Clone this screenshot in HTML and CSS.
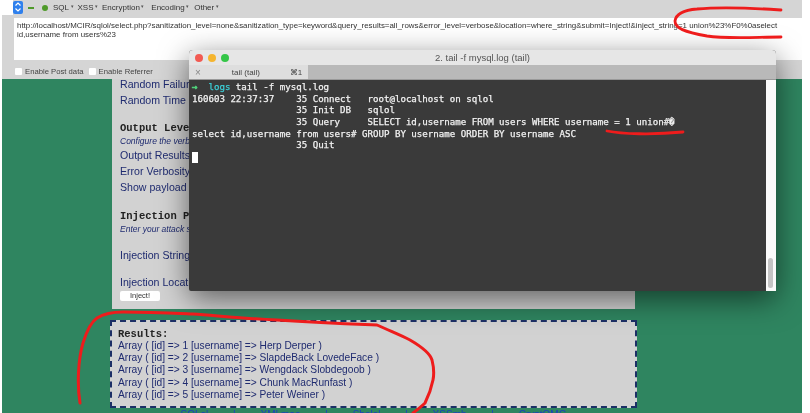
FILE: index.html
```html
<!DOCTYPE html>
<html lang="en">
<head>
<meta charset="utf-8">
<title>SQLol injection</title>
<link rel="stylesheet" href="styles.css">
</head>
<body>
<div class="shot">
  <header class="toolbar">
    <nav class="menu">
      <span class="stepper"><svg width="10" height="12" viewBox="0 0 10 12"><path d="M2.500 4.500 5 2l2.500 2.500M2.500 7.500 5 10l2.500-2.500" fill="none" stroke="#fff" stroke-width="1.200"/></svg></span>
      <span class="dash"></span>
      <span class="plus"></span>
      <span class="item">SQL</span><span class="item">XSS</span><span class="item wide">Encryption</span><span class="item mid">Encoding</span><span class="item">Other</span>
    </nav>
    <div class="url">http://localhost/MCIR/sqlol/select.php?sanitization_level=none&amp;sanitization_type=keyword&amp;query_results=all_rows&amp;error_level=verbose&amp;location=where_string&amp;submit=Inject!&amp;inject_string=1 union%23%F0%0aselect id,username from users%23</div>
    <div class="options">
      <span class="check"></span><span class="opt">Enable Post data</span>
      <span class="check"></span><span class="opt">Enable Referrer</span>
    </div>
  </header>
  <main class="page">
    <section class="panel">
      <p class="row first">Random Failure</p>
      <p class="row">Random Time Delay</p>
      <h3 class="head h-output">Output Level</h3>
      <p class="hint">Configure the verbosity</p>
      <p class="row tight">Output Results:</p>
      <p class="row tight">Error Verbosity:</p>
      <p class="row tight">Show payload in</p>
      <h3 class="head h-inject">Injection Parameters</h3>
      <p class="hint">Enter your attack string</p>
      <p class="row gap-a">Injection String:</p>
      <p class="row gap-b">Injection Location</p>
      <button class="inject" type="button">Inject!</button>
    </section>
    <section class="results">
      <h3 class="head">Results:</h3>
      <p>Array ( [id] =&gt; 1 [username] =&gt; Herp Derper )</p>
      <p>Array ( [id] =&gt; 2 [username] =&gt; SlapdeBack LovedeFace )</p>
      <p>Array ( [id] =&gt; 3 [username] =&gt; Wengdack Slobdegoob )</p>
      <p>Array ( [id] =&gt; 4 [username] =&gt; Chunk MacRunfast )</p>
      <p>Array ( [id] =&gt; 5 [username] =&gt; Peter Weiner )</p>
    </section>
    <footer class="foot">SQLol | XMLmao | Shelol | XSSmh | CryptOMG</footer>
  </main>

  <div class="terminal">
    <div class="titlebar">
      <span class="light red"></span><span class="light yellow"></span><span class="light green"></span>
      <span class="title">2. tail -f mysql.log (tail)</span>
    </div>
    <div class="tabs">
      <div class="tab"><span class="tab-x">×</span><span class="tab-name">tail (tail)</span><span class="tab-key">⌘1</span></div>
    </div>
    <div class="term-body">
      <div class="log">
        <div class="line"><span class="arrow">→</span>  <span class="cwd">logs</span> tail -f mysql.log</div>
        <div class="line">160603 22:37:37    35 Connect   root@localhost on sqlol</div>
        <div class="line">                   35 Init DB   sqlol</div>
        <div class="line">                   35 Query     SELECT id,username FROM users WHERE username = 1 union#�</div>
        <div class="line">select id,username from users# GROUP BY username ORDER BY username ASC</div>
        <div class="line">                   35 Quit</div>
        <div class="line"><span class="cursor"></span></div>
      </div>
      <div class="scroll"><span class="thumb"></span></div>
    </div>
  </div>

  <svg class="ink" width="800" height="413" viewBox="0 0 800 413">
    <path d="M779 10C750 8 715 7 695 9 682 10 674 14 673 21 673 28 682 32 705 36 725 39 755 37 779 37"/>
    <path d="M605 131C620 134 650 135 681 132"/>
    <path class="fat" d="M78 403C75 385 76 360 81 343 85 330 89 322 95 318 103 313 113 312 121 312 148 312 168 313 191 314 218 316 248 319 275 320 318 323 348 324 375 325 388 331 398 335 408 340 420 347 428 353 430 360 432 368 432 375 431 380 429 390 426 397 423 403 419 407 415 410 411 413"/>
  </svg>
</div>
</body>
</html>
```

FILE: styles.css
```css
* { box-sizing: border-box; }
html, body { margin: 0; padding: 0; background: #fff; overflow: hidden; }
p, h3 { margin: 0; }
.shot {
  position: relative;
  width: 800px;
  height: 413px;
  margin-left: 2px;
  display: flex;
  flex-direction: column;
  overflow: hidden;
  font-family: "Liberation Sans", Arial, sans-serif;
  filter: blur(.4px);
}
.toolbar { height: 79px; background: #d5d5d5; flex: none; display: flex; flex-direction: column; }
.menu { height: 15px; display: flex; align-items: center; font-size: 8px; color: #333; background: linear-gradient(to right, #fff 11px, transparent 11px); }
.stepper { width: 10px; height: 13px; background: #2f80ed; border-radius: 2px; display: flex; margin-left: 11px; }
.dash { width: 6px; height: 2px; background: #4f9a2a; margin-left: 5px; }
.plus { width: 6px; height: 6px; border-radius: 50%; background: #4f9a2a; margin-left: 8px; }
.item { margin-left: 4px; }
.item::after { content: "▾"; font-size: 5px; margin-left: 1.500px; vertical-align: 2px; color: #555; }
.plus + .item { margin-left: 5px; }
.wide { margin-right: 3px; }
.mid { margin-right: 1px; }
.url {
  margin: 3px 0 0 12px;
  height: 42px;
  width: 788px;
  background: #fff;
  font-size: 7.920px;
  line-height: 9px;
  color: #333;
  padding: 3px 3px;
}
.options { display: flex; align-items: center; height: 16px; margin-top: 3px; padding-left: 13px; font-size: 7.700px; color: #444; }
.check { width: 7px; height: 7px; background: #fff; border-radius: 1px; margin-right: 3px; }
.opt { margin-right: 5px; }
.page { flex: 1; min-height: 0; background: #2f8560; position: relative; padding-left: 110px; display: flex; flex-direction: column; align-items: flex-start; }
.panel { flex: none; width: 523px; height: 230px; background: #d2d2d2; padding: 0 0 0 8px; color: #1f2b70; }
.row { font-size: 10.600px; line-height: 14px; }
.first { margin-top: -2px; }
.row + .row { margin-top: 2px; }
.head { font: bold 10.500px/12px "Liberation Mono", monospace; color: #222; }
.h-output { margin-top: 15px; }
.h-inject { margin-top: 16px; }
.hint { font-size: 8.500px; font-style: italic; line-height: 11px; margin-top: 2px; }
.hint + .tight { margin-top: 1px; }
.row.gap-a { margin-top: 13px; }
.row.gap-b { margin-top: 13px; }
.inject { display: block; width: 40px; height: 10px; margin-top: 2px; padding: 0; border: 0; background: #fff; border-radius: 2px; font: 7.500px/10px "Liberation Sans", sans-serif; color: #333; }
.results {
  flex: none;
  width: 527px;
  height: 88px;
  margin: 11px 0 0 -2px;
  background: #d2d2d2;
  border: 2px dashed #1c2f66;
  padding: 6px 6px 0;
  color: #1f2b70;
  font-size: 10.200px;
  line-height: 12.200px;
}
.foot { flex: none; width: 527px; margin: 1px 0 0 -2px; text-align: center; font-size: 10px; line-height: 12px; color: #1b3fbf; word-spacing: 22px; }
.terminal {
  position: absolute;
  left: 187px;
  top: 50px;
  width: 587px;
  height: 241px;
  border-radius: 4px 4px 2px 2px;
  display: flex;
  flex-direction: column;
  box-shadow: 0 8px 30px rgba(0, 0, 0, .55);
  background: #3a3a3a;
}
.titlebar { height: 15px; background: #e6e6e6; border-radius: 4px 4px 0 0; display: flex; align-items: center; padding-left: 6px; position: relative; flex: none; }
.light { width: 8px; height: 8px; border-radius: 50%; margin-right: 5px; }
.red { background: #f25a52; }
.yellow { background: #f5b52f; }
.green { background: #35c648; }
.title { position: absolute; left: 0; right: 0; text-align: center; font-size: 9.500px; color: #555; }
.tabs { height: 15px; background: #b9b9b9; flex: none; border-bottom: 1px solid #999; }
.tab { width: 119px; height: 14px; background: #dedede; font-size: 8px; color: #444; display: flex; align-items: center; }
.tab-x { margin-left: 6px; color: #888; font-size: 10px; }
.tab-name { margin-left: 31px; }
.tab-key { margin-left: 30px; }
.term-body { flex: 1; display: flex; min-height: 0; border-radius: 0 0 2px 2px; }
.log { flex: 1; padding: 2px 0 0 3px; font: 9.120px/11.700px "DejaVu Sans Mono", monospace; color: #f2f2f2; -webkit-text-stroke: .25px #f2f2f2; overflow: hidden; }
.line { white-space: pre; height: 11.700px; }
.arrow { color: #4fd17a; -webkit-text-stroke: .7px #4fd17a; }
.cwd { color: #3cd0d8; -webkit-text-stroke: .25px #3cd0d8; }
.cursor { display: block; width: 6px; height: 11px; background: #fff; }
.scroll { width: 10px; background: #fafafa; padding: 178px 2px 2px; }
.thumb { display: block; width: 5px; height: 30px; border-radius: 3px; background: #c4c4c4; }
.ink { position: absolute; left: 0; top: 0; pointer-events: none; }
.ink path { fill: none; stroke: #ee1c1c; stroke-width: 2.800px; stroke-linecap: round; stroke-linejoin: round; }
.ink .fat { stroke-width: 3px; }
```
